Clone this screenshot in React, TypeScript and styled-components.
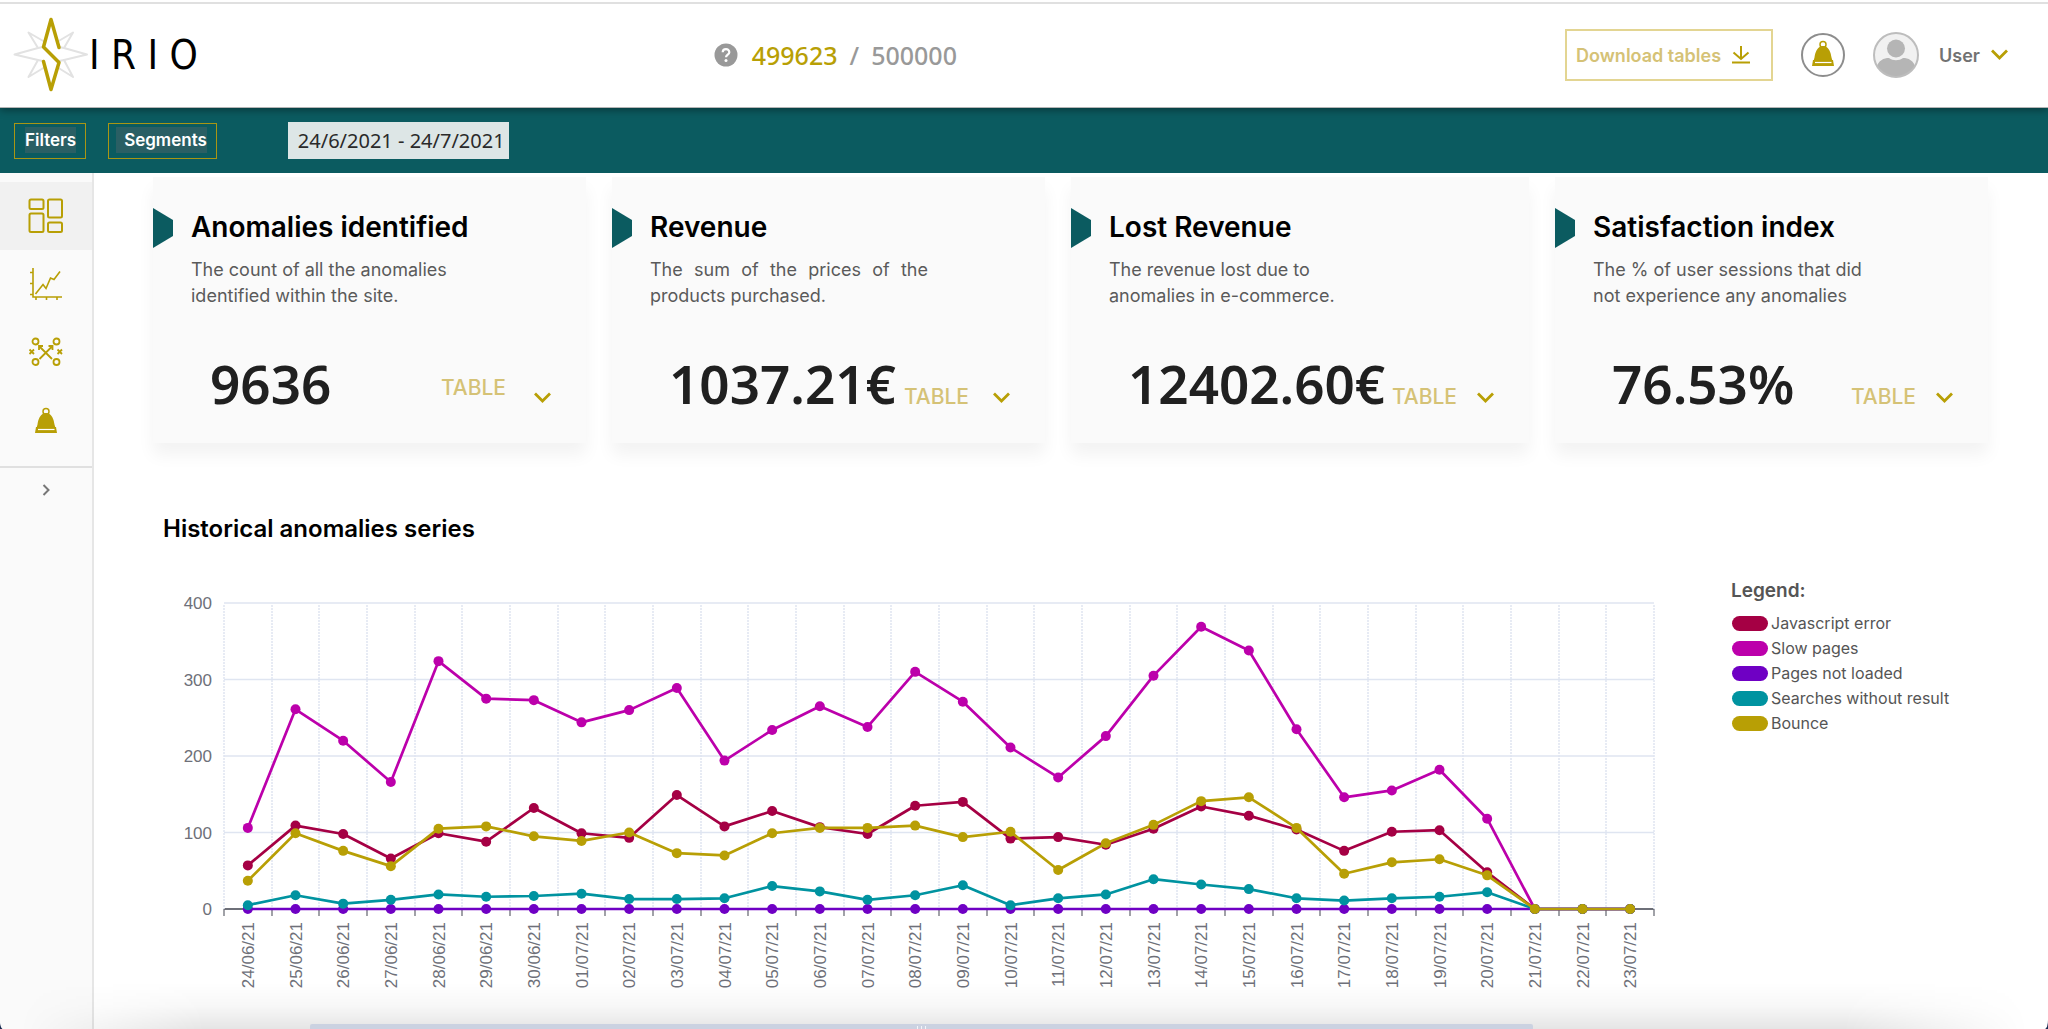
import React from "react";
import styled, { createGlobalStyle } from "styled-components";

const sans = `"Inter", "Liberation Sans", sans-serif`;
const numeric = `"Noto Sans", "Open Sans", sans-serif`;
const gold = "#b89f05";
const paleGold = "#d5c276";
const teal = "#0b5b60";

const GlobalStyle = createGlobalStyle`
  *, *::before, *::after { box-sizing: border-box; }
  body { margin: 0; background: #16284f; font-family: ${sans}; color: #555; overflow: hidden; }
  button { font-family: inherit; cursor: pointer; }
  h1, h2, p { margin: 0; }
`;

const Page = styled.div`
  display: flex;
  flex-direction: column;
  height: 100vh;
  overflow: hidden;
  border-radius: 0 0 3px 3px / 0 0 9px 9px;
  background: #fff;
`;

/* ---------- header ---------- */

const Header = styled.header`
  position: relative;
  z-index: 2;
  display: grid;
  grid-template-columns: 2fr auto 3fr;
  align-items: center;
  flex: none;
  height: 108px;
  padding: 3px 40px 0 13px;
  background: #fff;
  border-bottom: 1px solid #b5b5b5;
  box-shadow: inset 0 2px 0 #fff, inset 0 4px 0 #e0e0e0, 0 2px 8px rgba(0, 0, 0, 0.4);
`;

const Logo = styled.a`
  display: flex;
  align-items: center;
  color: #000;
  text-decoration: none;
`;

const Wordmark = styled.span`
  font-family: "DejaVu Sans Condensed", "DejaVu Sans", sans-serif;
  font-size: 40px;
  line-height: 56px;
  white-space: nowrap;
`;

const Quota = styled.div`
  display: flex;
  align-items: center;
  font-family: ${numeric};
  font-size: 25px;
  line-height: 32px;
  font-weight: 500;
  color: #999;
`;

const QuotaUsed = styled.span`
  margin: 0 12px 0 14px;
  color: ${gold};
`;

const QuotaTotal = styled.span`
  margin-left: 12px;
`;

const HeaderActions = styled.div`
  display: flex;
  align-items: center;
  justify-content: flex-end;
`;

const DownloadButton = styled.button`
  display: flex;
  align-items: center;
  gap: 10px;
  height: 52px;
  width: 208px;
  padding: 0 9px;
  border: 2px solid #e3d592;
  background: #fff;
  color: ${paleGold};
  font-size: 18px;
  font-weight: 600;
  white-space: nowrap;
`;

const BellButton = styled.button`
  display: flex;
  justify-content: center;
  align-items: center;
  width: 44px;
  height: 44px;
  margin-left: 28px;
  padding: 0 0 4px;
  border: 2px solid #8d8d8d;
  border-radius: 50%;
  background: #fff;
`;

const UserButton = styled.button`
  display: flex;
  align-items: center;
  margin-left: 28px;
  padding: 0;
  border: 0;
  background: none;
  color: #727272;
  font-size: 18px;
  font-weight: 600;
`;

const UserName = styled.span`
  margin: 0 11px 0 20px;
`;

/* ---------- filter bar ---------- */

const FilterBar = styled.div`
  display: flex;
  align-items: center;
  flex: none;
  height: 65px;
  padding: 0 14px;
  background: ${teal};
`;

const FilterButton = styled.button<{ $inset: number }>`
  height: 36px;
  margin-right: 22px;
  padding: 0 9px 2px ${(p) => p.$inset}px;
  border: 1px solid #a89614;
  background: ${teal};
  color: #fff;
  font-size: 17px;
  font-weight: 600;
`;

const FilterLabel = styled.span<{ $lead: number }>`
  display: block;
  padding-left: ${(p) => p.$lead}px;
  background: #2a5f64;
  line-height: 26px;
`;

const DateRange = styled.input`
  width: 221px;
  height: 37px;
  margin-left: 49px;
  padding: 0 0 0 10px;
  border: 0;
  border-radius: 0;
  background: #dde6e6;
  color: #2a2a2a;
  font-family: ${numeric};
  font-size: 20px;
`;

/* ---------- body ---------- */

const Body = styled.div`
  display: flex;
  flex: 1;
  min-height: 0;
`;

const Sidebar = styled.nav`
  display: flex;
  flex-direction: column;
  flex: none;
  width: 94px;
  padding-top: 9px;
  background: #fafafa;
  border-right: 2px solid #e6e6e6;
`;

const NavLink = styled.a<{ $active?: boolean }>`
  display: flex;
  align-items: center;
  justify-content: center;
  height: 68px;
  background: ${(p) => (p.$active ? "#f1f1f1" : "transparent")};
`;

const ExpandButton = styled.button`
  display: flex;
  justify-content: center;
  margin-top: 12px;
  padding: 16px 0;
  border: 0;
  border-top: 2px solid #e0e0e0;
  background: none;
`;

const Main = styled.main`
  flex: 1;
  min-width: 0;
  padding: 4px 60px 0 59px;
`;

const Cards = styled.section`
  display: grid;
  grid-template-columns: 433fr 433fr 458fr 433fr;
  gap: 26px;
`;

const Card = styled.article`
  display: grid;
  grid-template-columns: 20px 1fr;
  grid-template-rows: 40px auto 1fr;
  column-gap: 18px;
  height: 266px;
  padding-top: 31px;
  background: #fafafa;
  box-shadow: 0 12px 16px rgba(0, 0, 0, 0.05);
`;

const Marker = styled.span`
  width: 20px;
  height: 40px;
  background: ${teal};
  clip-path: polygon(0 0, 100% 30%, 100% 70%, 0 100%);
`;

const CardTitle = styled.h2`
  color: #000;
  font-size: 28px;
  line-height: 38px;
  font-weight: 600;
  white-space: nowrap;
`;

const CardText = styled.p<{ $justify?: boolean }>`
  grid-column: 2;
  width: 278px;
  margin-top: 9px;
  color: #5a5a5a;
  font-size: 18px;
  line-height: 26px;
  white-space: pre-line;
  text-align: ${(p) => (p.$justify ? "justify" : "left")};
`;

const CardFigures = styled.div`
  display: flex;
  grid-column: 2;
  align-items: flex-start;
  justify-content: space-between;
  padding: 41px 35px 0 19px;
`;

const Value = styled.strong`
  color: #202020;
  font-family: ${numeric};
  font-size: 53px;
  line-height: 68px;
  font-weight: 600;
`;

const TableButton = styled.button<{ $gap: number; $raised?: boolean }>`
  display: flex;
  align-items: ${(p) => (p.$raised ? "flex-start" : "center")};
  gap: ${(p) => p.$gap}px;
  margin-top: ${(p) => (p.$raised ? 26 : 35)}px;
  padding: 0;
  border: 0;
  background: none;
  color: ${paleGold};
  font-size: 21px;
  line-height: 24px;
  font-weight: 500;

  svg {
    margin-top: ${(p) => (p.$raised ? 16 : 2)}px;
  }
`;

const SeriesTitle = styled.h2`
  margin: 68px 0 0 10px;
  color: #000;
  font-size: 24px;
  line-height: 36px;
  font-weight: 600;
`;

const SeriesRow = styled.section`
  display: flex;
  align-items: flex-start;
  padding-right: 41px;
`;

const Chart = styled.svg`
  flex: 1;
  min-width: 0;
  margin-top: 46px;
  overflow: visible;
`;

const AxisLabel = styled.text`
  fill: #6e7079;
  font-family: "Liberation Sans", Arial, sans-serif;
  font-size: 17px;
`;

const Legend = styled.aside`
  flex: none;
  width: 216px;
  margin: 30px 0 0 77px;
`;

const LegendTitle = styled.h2`
  color: #555;
  font-size: 19px;
  line-height: 28px;
  font-weight: 600;
`;

const LegendList = styled.ul`
  margin: 5px 0 0;
  padding: 0 0 0 1px;
  list-style: none;
`;

const LegendItem = styled.li`
  display: flex;
  align-items: center;
  gap: 3px;
  height: 25px;
  font-size: 16px;
  line-height: 24px;
  white-space: nowrap;
`;

const Swatch = styled.span<{ $color: string }>`
  flex: none;
  width: 36px;
  height: 15px;
  margin-top: 2px;
  border-radius: 8px;
  background: ${(p) => p.$color};
`;

const BottomShade = styled.div`
  position: fixed;
  z-index: 3;
  right: 0;
  bottom: 0;
  left: 0;
  height: 46px;
  background: linear-gradient(to bottom, rgba(0, 0, 0, 0), rgba(0, 0, 0, 0.03) 50%, rgba(0, 0, 0, 0.1));
  mask-image: linear-gradient(to right, transparent 1%, #000 10%, #000 90%, transparent 99%);
  pointer-events: none;
`;

const ZoomTrack = styled.div`
  position: fixed;
  z-index: 4;
  right: 515px;
  bottom: 0;
  left: 310px;
  display: flex;
  justify-content: center;
  height: 5px;
  border-radius: 2px 2px 0 0;
  background: #cbd2e1;
`;

const Grip = styled.span`
  width: 9px;
  height: 3px;
  margin-top: 2px;
  background: repeating-linear-gradient(to right, #f3f5f9 0 1px, transparent 1px 4px);
`;

/* ---------- icons ---------- */

const LogoMark = () => (
  <svg width="76" height="76" viewBox="13 17 76 76" fill="none" strokeLinecap="round" strokeLinejoin="round" aria-hidden="true">
    <g stroke="#e2e2e2" strokeWidth="2">
      <path d="M43 47 L38 48 L14.500 54.500 L38 60 L43 61" />
      <path d="M59 47 L64 48 L87 54.500 L64 60 L59 61" />
      <path d="M45 42 L28.500 32.500 L38 48" />
      <path d="M57 42 L73 32.500 L64 48" />
      <path d="M45 67 L28.500 77 L38 60" />
      <path d="M57 67 L73 77 L64 60" />
    </g>
    <path d="M59 47.500 L51 19.500 L43.500 47 L59 62.500 L51 89.500 L43.500 61.500" stroke={gold} strokeWidth="3.500" />
  </svg>
);

const HelpIcon = () => (
  <svg width="24" height="24" viewBox="0 0 24 24" aria-hidden="true">
    <circle cx="12" cy="12" r="11.500" fill="#999" />
    <path d="M8.700 9.300 C8.700 5 15.300 5 15.300 9.200 C15.300 11.600 12 11.700 12 14.300" fill="none" stroke="#fff" strokeWidth="2.200" />
    <circle cx="12" cy="17.600" r="1.500" fill="#fff" />
  </svg>
);

const DownloadIcon = () => (
  <svg width="20" height="20" viewBox="0 0 20 20" fill="none" stroke={gold} strokeWidth="2" aria-hidden="true">
    <path d="M10 1 V13.500 M2.500 7.500 L10 14 L17.500 7.500 M1 17.500 H19" />
  </svg>
);

const BellIcon = () => (
  <svg width="24" height="27" viewBox="0 0 24 27" aria-hidden="true">
    <circle cx="12" cy="4.500" r="3" fill="none" stroke={gold} strokeWidth="1.500" />
    <path d="M8.500 7 C10 5.600 14 5.600 15.500 7 C19 9.500 20 14 20.500 17.500 L21.500 21 H2.500 L3.500 17.500 C4 14 5 9.500 8.500 7 Z" fill={gold} />
    <path d="M2 20 L1 26 H23 L22 20 Z" fill={gold} />
    <path d="M4 22.500 H20.500" stroke="#fff" strokeWidth="1.200" />
  </svg>
);

const Avatar = () => (
  <svg width="46" height="46" viewBox="0 0 46 46" aria-hidden="true">
    <defs>
      <clipPath id="avatar-disc">
        <circle cx="23" cy="23" r="22" />
      </clipPath>
    </defs>
    <circle cx="23" cy="23" r="22" fill="#f1f1f1" />
    <g clipPath="url(#avatar-disc)" fill="#b5b5b5">
      <circle cx="23" cy="16.500" r="9" />
      <path d="M3 37 C5 28 11 26 16 26 C20 29 26 29 30 26 C35 26 41 28 43 37 V46 H3 Z" />
    </g>
    <circle cx="23" cy="23" r="22" fill="none" stroke="#bdbdbd" strokeWidth="2" />
  </svg>
);

const ChevronDown = () => (
  <svg width="17" height="12" viewBox="0 0 17 12" fill="none" stroke={gold} strokeWidth="2.800" aria-hidden="true">
    <path d="M1 1.500 L8.500 9 L16 1.500" />
  </svg>
);

const DashboardIcon = () => (
  <svg width="36" height="36" viewBox="0 0 36 36" fill="none" stroke={gold} strokeWidth="2" aria-hidden="true">
    <rect x="1.500" y="1.500" width="14" height="9.500" rx="1.500" />
    <rect x="20" y="1.500" width="14" height="18" rx="1.500" />
    <rect x="1.500" y="15.500" width="14" height="18.500" rx="1.500" />
    <rect x="20" y="24.500" width="14" height="9.500" rx="1.500" />
  </svg>
);

const TrendIcon = () => (
  <svg width="36" height="36" viewBox="0 0 36 36" fill="none" stroke={gold} strokeWidth="1.600" aria-hidden="true">
    <path d="M5 2 V31 H34 M2 6.500 H5 M2 17.500 H5 M2 28.500 H5 M8 31 V34 M18.500 31 V34 M29 31 V34" />
    <path d="M7.500 28 L15 18.500 L18 22.500 L22.500 12 L26 13.500 L32 5.500" />
  </svg>
);

const StrategyIcon = () => (
  <svg width="36" height="30" viewBox="0 0 36 30" fill="none" stroke={gold} strokeWidth="1.800" aria-hidden="true">
    <circle cx="7.500" cy="4.500" r="3" />
    <circle cx="28.500" cy="4.500" r="3" />
    <circle cx="7.500" cy="25" r="3" />
    <circle cx="28.500" cy="25" r="3" />
    <path d="M1.500 12.500 L6 17 M6 12.500 L1.500 17 M29.500 12.500 L34 17 M34 12.500 L29.500 17" />
    <path d="M11.500 9.500 L24 22 M24 9.500 L11.500 22 M11 13 V9 H15 M20.500 9 H24.500 V13" />
  </svg>
);

const ExpandIcon = () => (
  <svg width="8" height="12" viewBox="0 0 8 12" fill="none" stroke="#777" strokeWidth="2" aria-hidden="true">
    <path d="M1.500 1 L6.500 6 L1.500 11" />
  </svg>
);

/* ---------- data ---------- */

const cards = [
  { title: "Anomalies identified", text: "The count of all the anomalies\nidentified within the site.", value: "9636", gap: 28, raised: true },
  { title: "Revenue", text: "The sum of the prices of the products purchased.", value: "1037.21€", gap: 24, justify: true },
  { title: "Lost Revenue", text: "The revenue lost due to\nanomalies in e-commerce.", value: "12402.60€", gap: 20 },
  { title: "Satisfaction index", text: "The % of user sessions that did\nnot experience any anomalies", value: "76.53%", gap: 20 },
];

const series = [
  { name: "Javascript error", color: "#a50044", data: [57, 109, 98, 66, 99, 88, 132, 99, 93, 149, 108, 128, 107, 98, 135, 140, 92, 94, 84, 105, 134, 122, 104, 76, 101, 103, 48, 0, 0, 0] },
  { name: "Slow pages", color: "#bc00ab", data: [106, 261, 220, 166, 324, 275, 273, 244, 260, 289, 194, 234, 265, 238, 310, 271, 211, 172, 226, 305, 369, 338, 235, 146, 155, 182, 118, 0, 0, 0] },
  { name: "Pages not loaded", color: "#6f00c4", data: Array(30).fill(0) as number[] },
  { name: "Searches without result", color: "#0093a0", data: [5, 18, 7, 12, 19, 16, 17, 20, 13, 13, 14, 30, 23, 12, 18, 31, 5, 14, 19, 39, 32, 26, 14, 11, 14, 16, 22, 0, 0, 0] },
  { name: "Bounce", color: gold, data: [37, 99, 76, 56, 105, 108, 95, 89, 100, 73, 70, 99, 106, 106, 109, 94, 101, 51, 86, 110, 141, 146, 106, 46, 61, 65, 44, 0, 0, 0] },
];

const days = Array.from({ length: 30 }, (_, i) => {
  const day = i < 7 ? 24 + i : i - 6;
  return `${String(day).padStart(2, "0")}/${i < 7 ? "06" : "07"}/21`;
});

/* ---------- chart ---------- */

const plot = { left: 71, top: 10, width: 1430, height: 306 };
const step = plot.width / days.length;
const xAt = (i: number) => plot.left + step * (i + 0.5);
const yAt = (v: number) => plot.top + plot.height * (1 - v / 400);
const base = yAt(0);

const SeriesChart = () => (
  <Chart viewBox="0 0 1501 400" role="img" aria-label="Historical anomalies series">
    {[400, 300, 200, 100, 0].map((v) => (
      <React.Fragment key={v}>
        <line x1={plot.left} x2={plot.left + plot.width} y1={yAt(v)} y2={yAt(v)} stroke={v ? "#dfe5f1" : "#6e7079"} strokeWidth={v ? 1.5 : 2} />
        <AxisLabel x={plot.left - 12} y={yAt(v) + 6} textAnchor="end">{v}</AxisLabel>
      </React.Fragment>
    ))}
    {Array.from({ length: days.length + 1 }, (_, i) => {
      const x = plot.left + Math.round(step * i);
      return (
        <React.Fragment key={i}>
          <line x1={x} x2={x} y1={plot.top + 2} y2={base} stroke="#dfe5f1" strokeWidth="1.500" strokeDasharray="2 1" />
          <line x1={x} x2={x} y1={base} y2={base + 7} stroke="#6e7079" strokeWidth="1.300" />
        </React.Fragment>
      );
    })}
    {days.map((d, i) => (
      <AxisLabel key={d} transform={`translate(${xAt(i) + 6} ${base + 13}) rotate(-90)`} textAnchor="end">{d}</AxisLabel>
    ))}
    {series.map((s) => (
      <g key={s.name} fill={s.color}>
        <polyline points={s.data.map((v, i) => `${xAt(i)},${yAt(v)}`).join(" ")} fill="none" stroke={s.color} strokeWidth="2.700" strokeLinejoin="bevel" />
        {s.data.map((v, i) => (
          <circle key={i} cx={xAt(i)} cy={yAt(v)} r="5" />
        ))}
      </g>
    ))}
  </Chart>
);

export default function App() {
  return (
    <>
      <GlobalStyle />
      <Page>
        <Header>
          <Logo href="#" aria-label="Sirio">
            <LogoMark />
            <Wordmark>I R I O</Wordmark>
          </Logo>
          <Quota>
            <HelpIcon />
            <QuotaUsed>499623</QuotaUsed>/<QuotaTotal>500000</QuotaTotal>
          </Quota>
          <HeaderActions>
            <DownloadButton type="button">
              Download tables
              <DownloadIcon />
            </DownloadButton>
            <BellButton type="button" aria-label="Notifications">
              <BellIcon />
            </BellButton>
            <UserButton type="button">
              <Avatar />
              <UserName>User</UserName>
              <ChevronDown />
            </UserButton>
          </HeaderActions>
        </Header>

        <FilterBar>
          <FilterButton type="button" $inset={10}>
            <FilterLabel $lead={0}>Filters</FilterLabel>
          </FilterButton>
          <FilterButton type="button" $inset={7}>
            <FilterLabel $lead={8}>Segments</FilterLabel>
          </FilterButton>
          <DateRange aria-label="Date range" defaultValue="24/6/2021 - 24/7/2021" />
        </FilterBar>

        <Body>
          <Sidebar>
            <NavLink href="#" $active aria-label="Dashboard"><DashboardIcon /></NavLink>
            <NavLink href="#" aria-label="Trends"><TrendIcon /></NavLink>
            <NavLink href="#" aria-label="Strategy"><StrategyIcon /></NavLink>
            <NavLink href="#" aria-label="Alerts"><BellIcon /></NavLink>
            <ExpandButton type="button" aria-label="Expand menu"><ExpandIcon /></ExpandButton>
          </Sidebar>

          <Main>
            <Cards>
              {cards.map((c) => (
                <Card key={c.title}>
                  <Marker />
                  <CardTitle>{c.title}</CardTitle>
                  <CardText $justify={c.justify}>{c.text}</CardText>
                  <CardFigures>
                    <Value>{c.value}</Value>
                    <TableButton type="button" $gap={c.gap} $raised={c.raised}>
                      TABLE
                      <ChevronDown />
                    </TableButton>
                  </CardFigures>
                </Card>
              ))}
            </Cards>

            <SeriesTitle>Historical anomalies series</SeriesTitle>
            <SeriesRow>
              <SeriesChart />
              <Legend>
                <LegendTitle>Legend:</LegendTitle>
                <LegendList>
                  {series.map((s) => (
                    <LegendItem key={s.name}>
                      <Swatch $color={s.color} />
                      {s.name}
                    </LegendItem>
                  ))}
                </LegendList>
              </Legend>
            </SeriesRow>
          </Main>
        </Body>
      </Page>
      <BottomShade />
      <ZoomTrack>
        <Grip />
      </ZoomTrack>
    </>
  );
}
